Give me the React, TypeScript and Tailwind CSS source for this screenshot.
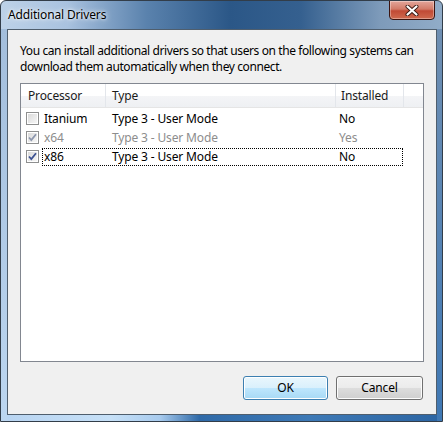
import React from 'react';

type Row = { proc: string; type: string; installed: string; checked: boolean; disabled?: boolean; focused?: boolean };

const rows: Row[] = [
  { proc: 'Itanium', type: 'Type 3 - User Mode', installed: 'No', checked: false },
  { proc: 'x64', type: 'Type 3 - User Mode', installed: 'Yes', checked: true, disabled: true },
  { proc: 'x86', type: 'Type 3 - User Mode', installed: 'No', checked: true, focused: true },
];

const CheckBox: React.FC<{ checked: boolean; disabled?: boolean }> = ({ checked, disabled }) => (
  <div className="w-[13px] h-[13px] border border-[#8e8f8f] bg-white p-px shrink-0">
    <div className="w-full h-full bg-[linear-gradient(135deg,#dadada,#f6f6f6)] relative">
      {checked && (
        <svg className="absolute -left-px -top-px" width="11" height="11" viewBox="0 0 11 11">
          <path d="M2 5.5 L4.3 8 L9 2.2" fill="none" stroke={disabled ? '#8c96ad' : '#3d5292'} strokeWidth="1.8" />
        </svg>
      )}
    </div>
  </div>
);

const App: React.FC = () => {
  return (
    <div className="w-[443px] h-[422px] bg-white tracking-[-0.15px]" style={{ fontFamily: '"Noto Sans", "Liberation Sans", sans-serif' }}>
      <div className="relative w-[443px] h-[422px] flex flex-col border border-[#323d49] rounded-t-[6px] overflow-hidden bg-[linear-gradient(90deg,#bdd2e8_0%,#a9c2df_15%,#5a82ad_33%,#2b5787_52%,#35608f_68%,#7e9bba_86%,#91acc8_100%)]">
        {/* glass edges */}
        <div className="absolute left-0 right-0 bottom-0 h-[7px] bg-[linear-gradient(90deg,#b8d4f1_0%,#c6e0f7_25%,#a8cbee_36%,#2f6aa8_45%,#3d79b6_70%,#2c65a3_100%)]" />
        <div className="absolute left-0 top-[28px] bottom-0 w-[6px] bg-[linear-gradient(180deg,#a3bedc,#bcd6f0)]" />
        <div className="absolute right-0 top-[28px] bottom-0 w-[5px] bg-[linear-gradient(180deg,#6f8fb2,#3f78b4)]" />

        <div className="relative h-[28px] flex items-center pl-[7px] text-[12px] text-black [text-shadow:0_0_6px_#ffffff,0_0_3px_#ffffff]">
          Additional Drivers
        </div>

        <button className="absolute top-[-1px] left-[388px] w-[46px] h-[20px] rounded-b-[4px] border border-[#3b1410] bg-[linear-gradient(180deg,#e3a69b_0%,#d27a68_45%,#c14a35_55%,#cf6a4f_100%)] flex items-center justify-center shadow-[inset_0_0_0_1px_rgba(255,255,255,0.35)]">
          <svg width="14" height="11" viewBox="0 0 14 11">
            <path d="M2.5 1.5 L11.5 9.5 M11.5 1.5 L2.5 9.5" stroke="#3a1a14" strokeWidth="4" strokeLinecap="round" />
            <path d="M2.5 1.5 L11.5 9.5 M11.5 1.5 L2.5 9.5" stroke="#ffffff" strokeWidth="2.2" strokeLinecap="round" />
          </svg>
        </button>

        <div className="relative flex-1 ml-[6px] mr-[5px] mb-[6px] border border-[#4f5e6d] bg-[#f0f0f0] flex flex-col px-[12px] pt-[13px] pb-[14px]">
          <div className="text-[12px] leading-[16px] text-black whitespace-nowrap tracking-[-0.4px]">
            <div>You can install additional drivers so that users on the following systems can</div>
            <div>download them automatically when they connect.</div>
          </div>

          <div className="mt-[8px] flex-1 border border-[#828790] bg-white flex flex-col text-[12px]">
            <div className="h-[24px] flex border-b border-[#e5e5e5] bg-[linear-gradient(180deg,#ffffff_0%,#ffffff_50%,#f4f5f7_51%,#eef0f3_100%)] text-[#1b1b1b]">
              <div className="w-[85px] pl-[7px] flex items-center border-r border-[#e3e6eb]">Processor</div>
              <div className="w-[230px] pl-[6px] flex items-center border-r border-[#e3e6eb]">Type</div>
              <div className="w-[68px] pl-[5px] flex items-center border-r border-[#e3e6eb]">Installed</div>
              <div className="flex-1" />
            </div>
            <div className="pt-[1px]">
              {rows.map((r) => (
                <div key={r.proc} className={`h-[19px] flex items-center ${r.disabled ? 'text-[#8d8d8d]' : 'text-black'}`}>
                  <div className="w-[21px] pl-[5px] flex items-center">
                    <CheckBox checked={r.checked} disabled={r.disabled} />
                  </div>
                  <div className={`flex h-[18px] items-center ${r.focused ? 'border border-dotted border-black' : 'border border-transparent'}`}>
                    <div className="w-[63px] pl-[1px]">{r.proc}</div>
                    <div className="w-[229px] pl-[6px]">{r.type}</div>
                    <div className="w-[67px] pl-[4px]">{r.installed}</div>
                  </div>
                </div>
              ))}
            </div>
          </div>

          <div className="mt-[14px] flex justify-end gap-[8px] pr-px">
            <button className="w-[85px] h-[24px] rounded-[3px] border border-[#3c7fb1] bg-[linear-gradient(180deg,#eaf6fd_0%,#d9f0fc_50%,#bee6fd_51%,#a7d9f5_100%)] shadow-[inset_0_0_0_1px_#ffffff] text-[12px] text-black">
              OK
            </button>
            <button className="w-[87px] h-[24px] rounded-[3px] border border-[#707070] bg-[linear-gradient(180deg,#f2f2f2_0%,#ebebeb_50%,#dddddd_51%,#cfcfcf_100%)] shadow-[inset_0_0_0_1px_#fcfcfc] text-[12px] text-black">
              Cancel
            </button>
          </div>
        </div>
      </div>
    </div>
  );
};

export default App;
